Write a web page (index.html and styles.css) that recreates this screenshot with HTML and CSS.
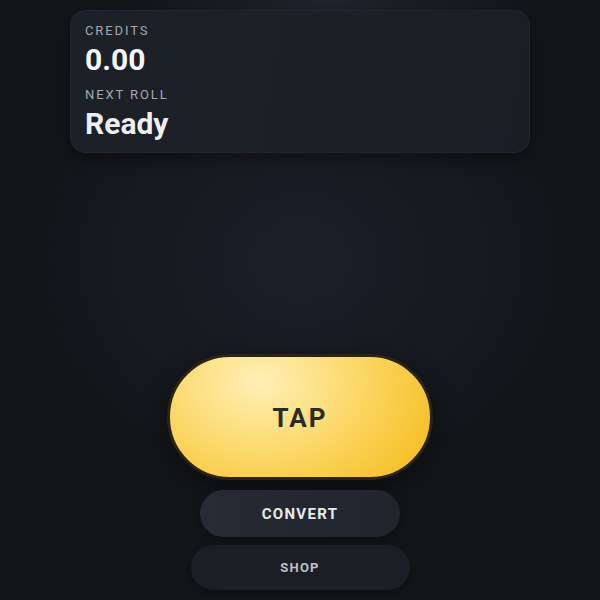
FILE: index.html
```html
<!DOCTYPE html>
<html>
<head>
<meta charset="utf-8">
<link rel="stylesheet" href="styles.css">
</head>
<body>
<main class="app">
  <section class="card">
    <div class="label">CREDITS</div>
    <div class="value">0.00</div>
    <div class="label">NEXT ROLL</div>
    <div class="value last">Ready</div>
  </section>
  <div class="actions">
    <button class="tap">TAP</button>
    <button class="convert">CONVERT</button>
    <button class="shop">SHOP</button>
  </div>
</main>
</body>
</html>
```
FILE: styles.css
```css
html, body {
  margin: 0;
  padding: 0;
  height: 600px;
  overflow: hidden;
}
body {
  font-family: Roboto, "Liberation Sans", sans-serif;
  background:
    radial-gradient(ellipse 260px 220px at 300px 260px, rgba(30,34,46,0.75), rgba(30,34,46,0) 100%),
    radial-gradient(ellipse 200px 60px at 330px 0px, rgba(40,44,56,0.6), rgba(40,44,56,0) 100%),
    #131619;
}
.app {
  display: flex;
  flex-direction: column;
  align-items: center;
  height: 600px;
}
.card {
  box-sizing: border-box;
  margin-top: 10px;
  width: 460px;
  height: 143px;
  padding: 12px 14px 9px;
  border-radius: 16px;
  background: linear-gradient(100deg, #1c2027 0%, #1b1f26 60%, #1a1e24 100%);
  border: 1px solid rgba(255,255,255,0.04);
  box-shadow: 0 6px 14px rgba(0,0,0,0.35);
}
.label {
  font-size: 13px;
  line-height: 16px;
  letter-spacing: 1.9px;
  color: #a4a9b2;
  margin-bottom: 3px;
}
.value {
  font-size: 30px;
  line-height: 36px;
  font-weight: 700;
  color: #f4f5f7;
  margin-bottom: 9px;
}
.value.last { margin-bottom: 0; color: #eceef0; }
.actions {
  margin-top: 201px;
  display: flex;
  flex-direction: column;
  align-items: center;
}
button {
  font-family: Roboto, "Liberation Sans", sans-serif;
  font-weight: 700;
  border: none;
  padding: 0;
  cursor: pointer;
}
.tap {
  box-sizing: border-box;
  width: 266px;
  height: 126px;
  border-radius: 63px;
  border: 3px solid #2a2414;
  background: radial-gradient(ellipse 240px 180px at 90px 25px, #fff0b8 0%, #fbd766 42%, #f4bc1c 85%, #f3b612 100%);
  font-size: 26px;
  line-height: 26px;
  padding-top: 2px;
  letter-spacing: 2px;
  color: #2b2a26;
  box-shadow: 0 8px 24px rgba(0,0,0,0.45);
}
.convert {
  margin-top: 10px;
  width: 200px;
  height: 47px;
  border-radius: 24px;
  background: linear-gradient(100deg, #262b34, #20252c);
  font-size: 15px;
  letter-spacing: 1.3px;
  color: #e8eaee;
  box-shadow: 0 4px 10px rgba(0,0,0,0.35);
}
.shop {
  margin-top: 8px;
  width: 219px;
  height: 45px;
  border-radius: 23px;
  background: #1b1e24;
  font-size: 13px;
  letter-spacing: 1.2px;
  color: #bcc0c7;
  box-shadow: 0 4px 10px rgba(0,0,0,0.3);
}
```
